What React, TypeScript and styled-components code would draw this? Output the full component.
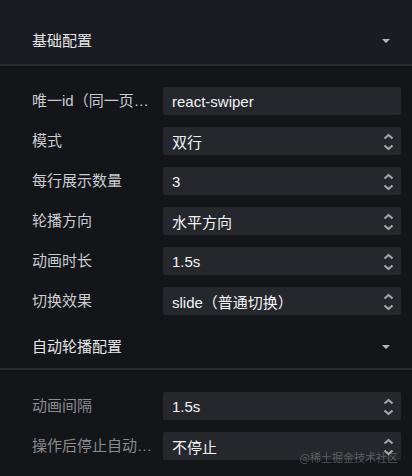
import styled, { createGlobalStyle } from "styled-components";

const GlobalStyle = createGlobalStyle`
  html, body {
    margin: 0;
    padding: 0;
    background: #141519;
  }
  body {
    font-family: "Liberation Sans", "Noto Sans CJK SC", sans-serif;
    -webkit-font-smoothing: antialiased;
  }
`;

const Panel = styled.div`
  position: relative;
  width: 412px;
  height: 476px;
  overflow: hidden;
  background: #141519;
`;

const SectionHeader = styled.div<{ $top: boolean }>`
  display: flex;
  align-items: center;
  justify-content: space-between;
  padding: ${({ $top }) => ($top ? "31px 21px 13px 32px" : "22px 21px 11px 32px")};
  background: ${({ $top }) => ($top ? "#1b1c21" : "#141519")};
  border-bottom: 2px solid #2a2b30;
`;

const SectionTitle = styled.h6`
  margin: 0;
  font-size: 15px;
  line-height: 20px;
  font-weight: 400;
  color: #e6e7ea;
  font-family: "Liberation Sans", "Noto Sans CJK SC", sans-serif;
`;

const SectionBody = styled.div<{ $top: boolean }>`
  display: flex;
  flex-direction: column;
  gap: 12px;
  padding: ${({ $top }) => ($top ? "21px 11px 0 32px" : "22px 11px 0 32px")};
`;

const Row = styled.div`
  display: flex;
  align-items: center;
  height: 28px;
`;

const Label = styled.span<{ $muted?: boolean }>`
  width: 122px;
  margin-right: 9px;
  flex-shrink: 0;
  font-size: 15px;
  line-height: 20px;
  color: ${({ $muted }) => ($muted ? "#8a8c91" : "#c9ccd2")};
  white-space: nowrap;
  overflow: hidden;
  text-overflow: ellipsis;
`;

const Field = styled.div`
  position: relative;
  display: flex;
  align-items: center;
  flex: 1;
  height: 28px;
  padding: 0 9px;
  background: #25272d;
  border-radius: 2px;
  font-size: 15px;
  color: #f2f3f5;
  box-sizing: border-box;
`;

const Arrows = styled.svg`
  position: absolute;
  right: 7px;
  top: 4px;
`;

const Watermark = styled.span`
  position: absolute;
  right: 14px;
  bottom: 11px;
  font-size: 11px;
  color: rgba(200, 202, 208, 0.35);
  font-family: "Noto Sans CJK SC", sans-serif;
`;

const Chevron = () => (
  <svg width="10" height="6" viewBox="0 0 10 6">
    <path d="M1 1 L9 1 L5.6 4.6 Q5 5.2 4.4 4.6 Z" fill="#b4b6bb" />
  </svg>
);

const SelectArrows = () => (
  <Arrows width="11" height="20" viewBox="0 0 11 20">
    <path d="M1.5 7.5 L5.5 4 L9.5 7.5" fill="none" stroke="#a3a6ac" strokeWidth="2.2" strokeLinejoin="round" />
    <path d="M1.5 14.5 L5.5 18 L9.5 14.5" fill="none" stroke="#a3a6ac" strokeWidth="2.2" strokeLinejoin="round" />
  </Arrows>
);

type Item = { label: string; value: string; select?: boolean };

const basic: Item[] = [
  { label: "唯一id（同一页面唯一）", value: "react-swiper" },
  { label: "模式", value: "双行", select: true },
  { label: "每行展示数量", value: "3", select: true },
  { label: "轮播方向", value: "水平方向", select: true },
  { label: "动画时长", value: "1.5s", select: true },
  { label: "切换效果", value: "slide（普通切换）", select: true },
];

const auto: Item[] = [
  { label: "动画间隔", value: "1.5s", select: true },
  { label: "操作后停止自动轮播", value: "不停止", select: true },
];

const Rows = ({ items, muted }: { items: Item[]; muted?: boolean }) => (
  <>
    {items.map((it) => (
      <Row key={it.label}>
        <Label $muted={muted}>{it.label}</Label>
        <Field>
          {it.value}
          {it.select && <SelectArrows />}
        </Field>
      </Row>
    ))}
  </>
);

export default function App() {
  return (
    <Panel>
      <GlobalStyle />
      <SectionHeader $top>
        <SectionTitle>基础配置</SectionTitle>
        <Chevron />
      </SectionHeader>
      <SectionBody $top>
        <Rows items={basic} />
      </SectionBody>
      <SectionHeader $top={false}>
        <SectionTitle>自动轮播配置</SectionTitle>
        <Chevron />
      </SectionHeader>
      <SectionBody $top={false}>
        <Rows items={auto} muted />
      </SectionBody>
      <Watermark>@稀土掘金技术社区</Watermark>
    </Panel>
  );
}
